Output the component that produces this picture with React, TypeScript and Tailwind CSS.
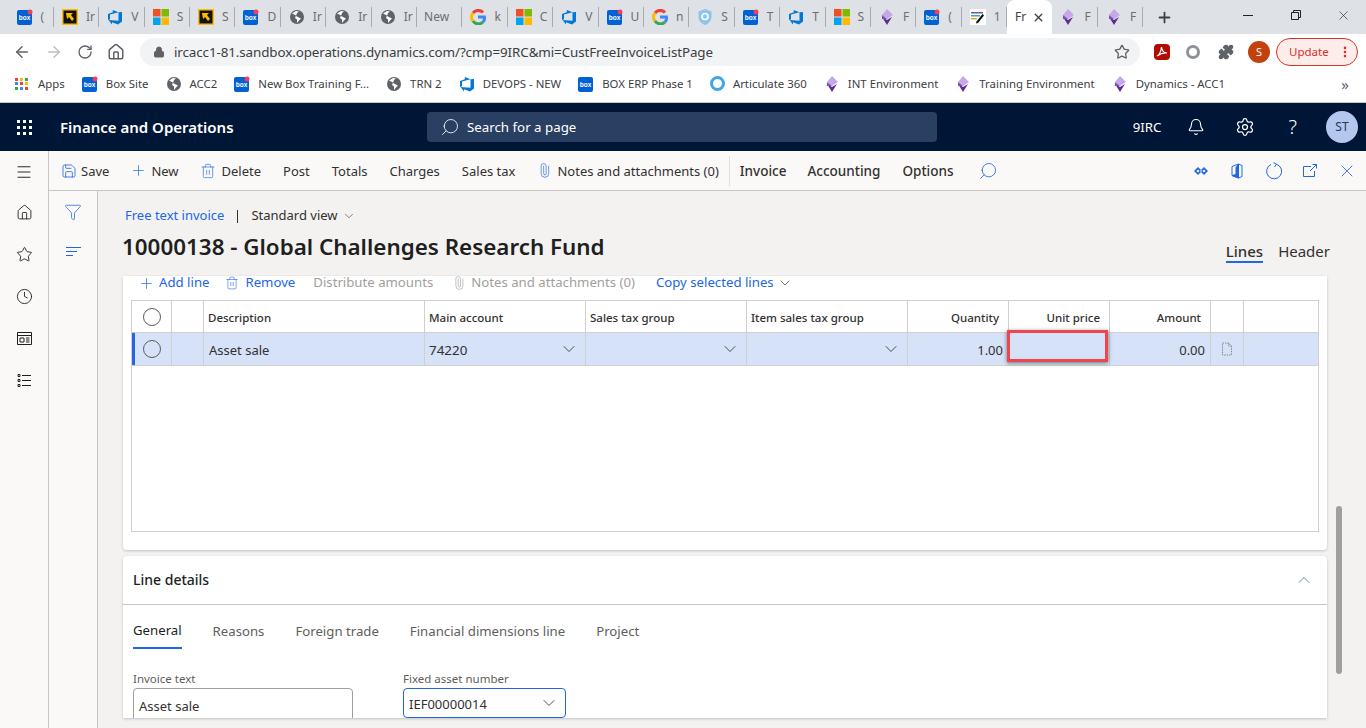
import {
    ArrowLeft,
    ArrowRight,
    Bell,
    ChevronDown,
    ChevronUp,
    Clock,
    Filter,
    Home,
    Lock,
    Menu,
    MoreVertical,
    Paperclip,
    Plus,
    Puzzle,
    RotateCw,
    Save,
    Search,
    Settings,
    Star,
    Trash2,
    X,
} from "lucide-react";

function BoxIcon({ dot = true }: { dot?: boolean }) {
    return (
        <svg width="16" height="16" viewBox="0 0 16 16" className="shrink-0">
            <rect x="0" y="1" width="15" height="15" rx="2" fill="#0061d5" />
            <text x="7.5" y="11" textAnchor="middle" fontSize="6.5" fontWeight="700" fill="#fff" fontFamily="Liberation Sans">
                box
            </text>
            {dot && <circle cx="13" cy="3" r="2.5" fill="#f0415a" />}
        </svg>
    );
}

function YellowIcon() {
    return (
        <svg width="16" height="16" viewBox="0 0 16 16" className="shrink-0">
            <rect width="16" height="16" fill="#fbbc05" />
            <rect x="1.5" y="1.5" width="13" height="13" fill="#111" />
            <path d="M4 4h7l-2 2 3 4-2 2-3-4-2 2z" fill="#fbbc05" />
        </svg>
    );
}

function DevopsIcon() {
    return (
        <svg width="16" height="16" viewBox="0 0 16 16" className="shrink-0">
            <path d="M15 3v9.5l-4 3-6-2.2v2.2L1.5 11l10 .8V3.3zM11.5 3.3 5.8 1v2.2L1 5v6l2-.8V5.5z" fill="#0078d4" />
        </svg>
    );
}

function MsIcon() {
    return (
        <svg width="16" height="16" viewBox="0 0 16 16" className="shrink-0">
            <rect width="7.5" height="7.5" fill="#f25022" />
            <rect x="8.5" width="7.5" height="7.5" fill="#7fba00" />
            <rect y="8.5" width="7.5" height="7.5" fill="#00a4ef" />
            <rect x="8.5" y="8.5" width="7.5" height="7.5" fill="#ffb900" />
        </svg>
    );
}

function GlobeIcon() {
    return (
        <svg width="16" height="16" viewBox="0 0 16 16" className="shrink-0">
            <circle cx="8" cy="8" r="7" fill="#5f6368" />
            <path d="M3 4.5 7 6.5 6 9l2 1.5V14l2-2.5 2-2-3-1.5-2-1 1-3 2-1.5-3-.5z" fill="#fff" />
        </svg>
    );
}

function GoogleIcon() {
    return (
        <svg width="16" height="16" viewBox="0 0 16 16" className="shrink-0" fill="none" strokeWidth="3">
            <path d="M13 3.5A6.5 6.5 0 0 0 3 4" stroke="#ea4335" />
            <path d="M3 4a6.500 6.500 0 0 0 0 8" stroke="#fbbc05" />
            <path d="M3 12a6.500 6.500 0 0 0 10 1" stroke="#34a853" />
            <path d="M13 13a6 6 0 0 0 1.500-5H8" stroke="#4285f4" />
        </svg>
    );
}

function ShieldIcon() {
    return (
        <svg width="16" height="16" viewBox="0 0 16 16" className="shrink-0">
            <path d="M8 0 14.500 2.500V8c0 4-3 6.500-6.500 8C4.500 14.500 1.500 12 1.500 8V2.500z" fill="#8ec5ee" />
            <circle cx="8" cy="7.500" r="3" fill="none" stroke="#fff" strokeWidth="1.500" />
        </svg>
    );
}

function DynamicsIcon() {
    return (
        <svg width="16" height="16" viewBox="0 0 16 16" className="shrink-0">
            <path d="M8 0 14 6 8 10 3 6z" fill="#c6a8e8" />
            <path d="M3 8 8 11 13 8 8 16z" fill="#5c2d91" />
            <path d="M3 6 8 10 3 10z" fill="#7b4fb5" />
        </svg>
    );
}

function NotesIcon() {
    return (
        <svg width="16" height="16" viewBox="0 0 16 16" className="shrink-0">
            <rect width="16" height="16" fill="#fff" />
            <path d="M1 3h12v1.500H1z" fill="#7b4fb5" />
            <path d="M1 6h9v1.500H1z" fill="#2bb5a0" />
            <path d="M1 9h6v1.500H1z" fill="#f0a030" />
            <path d="M12.500 5 14 6.500 8 14l-2 .5.500-2z" fill="#111" />
        </svg>
    );
}

const tabs: { icon?: JSX.Element; label: string }[] = [
    { icon: <BoxIcon />, label: "(" },
    { icon: <YellowIcon />, label: "Ir" },
    { icon: <DevopsIcon />, label: "V" },
    { icon: <MsIcon />, label: "S" },
    { icon: <YellowIcon />, label: "S" },
    { icon: <BoxIcon />, label: "D" },
    { icon: <GlobeIcon />, label: "Ir" },
    { icon: <GlobeIcon />, label: "Ir" },
    { icon: <GlobeIcon />, label: "Ir" },
    { label: "New" },
    { icon: <GoogleIcon />, label: "k" },
    { icon: <MsIcon />, label: "C" },
    { icon: <DevopsIcon />, label: "V" },
    { icon: <BoxIcon />, label: "U" },
    { icon: <GoogleIcon />, label: "n" },
    { icon: <ShieldIcon />, label: "S" },
    { icon: <BoxIcon />, label: "T" },
    { icon: <DevopsIcon />, label: "T" },
    { icon: <MsIcon />, label: "S" },
    { icon: <DynamicsIcon />, label: "F" },
    { icon: <BoxIcon />, label: "(" },
    { icon: <NotesIcon />, label: "1" },
    { label: "Fr" },
    { icon: <DynamicsIcon />, label: "F" },
    { icon: <DynamicsIcon />, label: "F" },
];

function TabStrip() {
    return (
        <div className="h-[34px] bg-[#dee1e6] flex items-stretch pl-[8.5px] relative">
            {tabs.map((tab, index) =>
                index === 22 ? (
                    <div
                        key={index}
                        className="w-[45.4px] bg-white rounded-t-lg flex items-center pl-[8px] gap-[6px] text-[12px] text-[#3c4043]"
                    >
                        <span>{tab.label}</span>
                        <X size={13} strokeWidth={2.5} className="text-[#3c4043]" />
                    </div>
                ) : (
                    <div
                        key={index}
                        className={
                            tab.icon
                                ? "w-[45.4px] flex items-center pl-[8px] gap-[8px] text-[12px] text-[#6b6e72] overflow-hidden border-r border-[#a8abaf] my-[7px]"
                                : "w-[45.4px] flex items-center pl-[7px] text-[12px] text-[#6b6e72] overflow-hidden border-r border-[#a8abaf] my-[7px]"
                        }
                    >
                        {tab.icon}
                        <span className="whitespace-nowrap">{tab.label}</span>
                    </div>
                )
            )}
            <Plus size={17} strokeWidth={2.5} className="text-[#3c4043] ml-[13px] self-center" />
            <div className="flex-1 flex items-start justify-end text-[#3c4043]">
                <div className="w-[48px] h-[30px] flex items-center justify-center">
                    <div className="w-[10px] h-px bg-[#202124]" />
                </div>
                <div className="w-[48px] h-[30px] flex items-center justify-center">
                    <svg width="10" height="10" viewBox="0 0 10 10" fill="none" stroke="#202124">
                        <path d="M.5 2.500h7v7h-7zM2.500 2.500v-2h7v7h-2" />
                    </svg>
                </div>
                <div className="w-[46px] h-[30px] flex items-center justify-center">
                    <X size={15} strokeWidth={1} className="text-[#202124]" />
                </div>
            </div>
        </div>
    );
}

function AddressBar() {
    return (
        <div className="h-[33px] pt-[4px] pb-px bg-white flex items-center text-[#5f6368]">
            <div className="flex items-center w-[140px] pl-[13px] gap-[14px]">
                <ArrowLeft size={18} strokeWidth={2} />
                <ArrowRight size={18} strokeWidth={2} className="text-[#bdc1c6]" />
                <RotateCw size={16} strokeWidth={2} />
                <Home size={18} strokeWidth={2} />
            </div>
            <div className="w-[1000px] h-[28px] rounded-full bg-[#f1f3f4] flex items-center pl-[13px] pr-[10px] text-[13.4px]">
                <Lock size={12} className="text-[#5f6368] mr-[9px]" fill="#5f6368" />
                <span className="text-[#3c4043] tracking-[-0.1px]">
                    ircacc1-81.sandbox.operations.dynamics.com/?cmp=9IRC&amp;mi=CustFreeInvoiceListPage
                </span>
                <Star size={16} className="ml-auto text-[#5f6368]" />
            </div>
            <div className="flex items-center pl-[14px] gap-[16px] flex-1">
                <div className="w-[16px] h-[16px] bg-[#b30b00] rounded-sm flex items-center justify-center">
                    <svg width="12" height="12" viewBox="0 0 12 12" fill="none" stroke="#fff" strokeWidth="1.2">
                        <path d="M1 10c2-1 4-5 4.500-9 .5 4 3 6 5.500 6-3-.5-7 1-10 3z" />
                    </svg>
                </div>
                <div className="w-[14px] h-[14px] rounded-full border-[3px] border-[#8f9296]" />
                <Puzzle size={16} fill="#5f6368" className="ml-[2px]" />
                <div className="w-[22px] h-[22px] rounded-full bg-[#c2410c] text-white text-[11px] flex items-center justify-center ml-[-2px]">
                    S
                </div>
                <div className="w-[82px] h-[28px] rounded-full border border-[#d93025] bg-[#fcecea] text-[#d93025] text-[11.5px] flex items-center pl-[12px] ml-[-10px]">
                    Update
                    <MoreVertical size={14} strokeWidth={2.5} className="ml-auto mr-[5px]" />
                </div>
            </div>
        </div>
    );
}

const bookmarks: { icon: JSX.Element; label: string }[] = [
    { icon: <BoxIcon />, label: "Box Site" },
    { icon: <GlobeIcon />, label: "ACC2" },
    { icon: <BoxIcon />, label: "New Box Training F..." },
    { icon: <GlobeIcon />, label: "TRN 2" },
    { icon: <DevopsIcon />, label: "DEVOPS - NEW" },
    { icon: <BoxIcon dot={false} />, label: "BOX ERP Phase 1" },
    {
        icon: <div className="w-[15px] h-[15px] rounded-full border-[3px] border-[#42a5e8]" />,
        label: "Articulate 360",
    },
    { icon: <DynamicsIcon />, label: "INT Environment" },
    { icon: <DynamicsIcon />, label: "Training Environment" },
    { icon: <DynamicsIcon />, label: "Dynamics - ACC1" },
];

function BookmarkBar() {
    return (
        <div className="h-[33px] pt-px bg-white flex items-center pl-[15px] gap-[17px] text-[11.4px] text-[#3c4043] relative">
            <div className="flex items-center gap-[10px]">
                <div className="grid grid-cols-3 gap-[1.5px] w-[13px]">
                    <div className="w-[3px] h-[3px] bg-[#ea4335]" />
                    <div className="w-[3px] h-[3px] bg-[#fbbc05]" />
                    <div className="w-[3px] h-[3px] bg-[#34a853]" />
                    <div className="w-[3px] h-[3px] bg-[#4285f4]" />
                    <div className="w-[3px] h-[3px] bg-[#ea4335]" />
                    <div className="w-[3px] h-[3px] bg-[#fbbc05]" />
                    <div className="w-[3px] h-[3px] bg-[#34a853]" />
                    <div className="w-[3px] h-[3px] bg-[#4285f4]" />
                    <div className="w-[3px] h-[3px] bg-[#ea4335]" />
                </div>
                <span>Apps</span>
            </div>
            {bookmarks.map((bookmark, index) => (
                <div key={index} className="flex items-center gap-[8px] whitespace-nowrap">
                    {bookmark.icon}
                    <span>{bookmark.label}</span>
                </div>
            ))}
            <span className="ml-auto mr-[17px] text-[15px] text-[#5f6368]">»</span>
        </div>
    );
}

function NavBar() {
    return (
        <div className="h-[48px] bg-[#001636] flex items-center text-white">
            <div className="w-[48px] flex justify-center">
                <div className="grid grid-cols-3 gap-[3px]">
                    {[0, 1, 2, 3, 4, 5, 6, 7, 8].map((dot) => (
                        <div key={dot} className="w-[3px] h-[3px] bg-white" />
                    ))}
                </div>
            </div>
            <div className="ml-[12px] w-[367px] text-[15px] font-semibold pt-px">Finance and Operations</div>
            <div className="w-[510px] h-[30px] rounded-sm bg-[#2a4063] flex items-center pl-[13px] gap-[7px] text-[13.3px]">
                <Search size={20} strokeWidth={1} className="-scale-x-100" />
                <span className="pt-[2px]">Search for a page</span>
            </div>
            <div className="ml-auto flex items-center pr-[8px]">
                <span className="text-[13.3px] mr-[25px] pt-px">9IRC</span>
                <Bell size={18} strokeWidth={1.5} className="mr-[30px]" />
                <Settings size={20} strokeWidth={1.5} className="mr-[34px]" />
                <span className="text-[20px] font-light mr-[29px]">?</span>
                <div className="w-[32px] h-[32px] rounded-full bg-[#b4c7ee] text-[#28374f] text-[12px] flex items-center justify-center">
                    ST
                </div>
            </div>
        </div>
    );
}

function SideRail() {
    return (
        <div className="w-[49px] shrink-0 bg-[#faf9f8] border-r border-[#c8c6c4] flex flex-col items-center pt-[12px] gap-[25px] text-[#201f1e]">
            <Menu size={18} strokeWidth={1.25} className="mb-[-2px]" />
            <Home size={17} strokeWidth={1.25} />
            <Star size={17} strokeWidth={1.25} />
            <Clock size={17} strokeWidth={1.25} />
            <svg width="17" height="17" viewBox="0 0 17 17" fill="none" stroke="#201f1e">
                <path d="M1.500 2.500h14v12h-14zM1.500 5.500h14M4 8h4v4H4zM10 8h3.500M10 10h3.500M10 12h3.500" />
            </svg>
            <svg width="17" height="17" viewBox="0 0 17 17" fill="none" stroke="#201f1e">
                <path d="M2 2.500h2v2H2zM2 7.500h2v2H2zM2 12.500h2v2H2zM6 3.500h9M6 8.500h9M6 13.500h9" />
            </svg>
        </div>
    );
}

function CommandBar() {
    return (
        <div className="h-[40px] bg-[#faf9f8] border-b border-[#c8c6c4] flex items-center pl-[12px] text-[13px] text-[#323130]">
            <Save size={16} strokeWidth={1.25} className="text-[#2266e3] mr-[4px]" />
            <span className="mr-[21px] pt-[2px]">Save</span>
            <Plus size={17} strokeWidth={1} className="text-[#2266e3] mr-[4px]" />
            <span className="mr-[21px] pt-[2px]">New</span>
            <Trash2 size={16} strokeWidth={1} className="text-[#2266e3] mr-[6px]" />
            <span className="mr-[22px] pt-[2px]">Delete</span>
            <span className="mr-[22px] pt-[2px]">Post</span>
            <span className="mr-[22px] pt-[2px]">Totals</span>
            <span className="mr-[22px] pt-[2px]">Charges</span>
            <span className="mr-[22px] pt-[2px]">Sales tax</span>
            <Paperclip size={15} strokeWidth={1} className="text-[#2266e3] mr-[5px] -rotate-45" />
            <span className="pt-[2px]">Notes and attachments (0)</span>
            <div className="w-px h-[30px] bg-[#e1dfdd] mx-[10px]" />
            <span className="mr-[21px] text-[13.5px] font-medium pt-[2px]">Invoice</span>
            <span className="mr-[22px] text-[13.5px] font-medium pt-[2px]">Accounting</span>
            <span className="text-[13.5px] font-medium pt-[2px]">Options</span>
            <Search size={20} strokeWidth={1} className="text-[#2266e3] ml-[25px] -scale-x-100" />
            <div className="ml-auto flex items-center pr-px text-[#2266e3]">
                <div className="w-[36.5px] flex justify-center">
                    <svg width="16" height="16" viewBox="0 0 16 16" fill="#2266e3">
                        <path d="M5 4 9 8 5 12 1 8zM11 4 15 8 11 12 7 8z" fillRule="evenodd" />
                        <path d="M5 6.500 6.500 8 5 9.500 3.500 8zM11 6.500 12.500 8 11 9.500 9.500 8z" fill="#fff" />
                    </svg>
                </div>
                <div className="w-[36.5px] flex justify-center">
                    <svg width="16" height="16" viewBox="0 0 16 16" fill="none" stroke="#2266e3">
                        <path d="M9.500 1 3 3.500v9L9.500 15 13 13.500v-11z" />
                        <path d="M9.500 1v14L3 12.500l4-1V4.500z" fill="#2266e3" />
                    </svg>
                </div>
                <div className="w-[36.5px] flex justify-center">
                    <svg width="18" height="18" viewBox="0 0 18 18" fill="none" stroke="#2266e3">
                        <path d="M6 2.500a7.500 7.500 0 1 0 5.500-.3" />
                        <path d="M8.500.5 11.500 2.200 9.500 5" />
                    </svg>
                </div>
                <div className="w-[36.5px] flex justify-center">
                    <svg width="16" height="16" viewBox="0 0 16 16" fill="none" stroke="#2266e3">
                        <path d="M9 3.500H1.500v10h11V8M8 8l6.500-6.500M10.500 1.500h4v4" />
                    </svg>
                </div>
                <div className="w-[36.5px] flex justify-center">
                    <X size={20} strokeWidth={1} />
                </div>
            </div>
        </div>
    );
}

function RadioCircle() {
    return <div className="w-[18px] h-[18px] rounded-full border border-[#605e5c]" />;
}

function LinesGrid() {
    const cols =
        "grid grid-cols-[40px_32px_221px_161px_161px_161px_101px_101px_101px_33px_75px]";
    const cell = "border-r border-[#d2d0ce] flex items-center";
    return (
        <div className="mx-[8px] h-[232px] border border-[#d2d0ce] bg-white">
            <div className={`${cols} h-[32px] border-b border-[#d2d0ce] text-[11.5px] font-medium text-[#323130]`}>
                <div className={`${cell} justify-center`}>
                    <RadioCircle />
                </div>
                <div className={cell} />
                <div className={`${cell} pl-[4px] pt-[2px]`}>Description</div>
                <div className={`${cell} pl-[4px] pt-[2px]`}>Main account</div>
                <div className={`${cell} pl-[4px] pt-[2px]`}>Sales tax group</div>
                <div className={`${cell} pl-[4px] pt-[2px]`}>Item sales tax group</div>
                <div className={`${cell} justify-end pr-[9px] pt-[2px]`}>Quantity</div>
                <div className={`${cell} justify-end pr-[9px] pt-[2px]`}>Unit price</div>
                <div className={`${cell} justify-end pr-[9px] pt-[2px]`}>Amount</div>
                <div className={cell} />
                <div />
            </div>
            <div className={`${cols} h-[33px] border-b border-[#d2d0ce] bg-[#d5e2f8] text-[13px] text-[#323130] relative`}>
                <div className={`${cell} justify-center relative`}>
                    <div className="absolute left-0 top-0 bottom-0 w-[3px] bg-[#2266e3]" />
                    <RadioCircle />
                </div>
                <div className={cell} />
                <div className={`${cell} pl-[5px] pt-[3px]`}>Asset sale</div>
                <div className={`${cell} pl-[4px] justify-between pr-[6px]`}>
                    <span className="pt-[2px] text-[13.4px]">74220</span>
                    <ChevronDown size={20} strokeWidth={1} />
                </div>
                <div className={`${cell} justify-end pr-[6px]`}>
                    <ChevronDown size={20} strokeWidth={1} />
                </div>
                <div className={`${cell} justify-end pr-[6px]`}>
                    <ChevronDown size={20} strokeWidth={1} />
                </div>
                <div className={`${cell} justify-end pr-[5px] pt-[3px]`}>1.00</div>
                <div className={`${cell} relative`}>
                    <div className="absolute -left-[2px] -top-[3px] w-[101px] h-[32px] border-[3px] border-[#f0454c] shadow-[0_1px_4px_rgba(0,0,0,0.5)]" />
                </div>
                <div className={`${cell} justify-end pr-[5px] pt-[3px]`}>0.00</div>
                <div className={`${cell} justify-center`}>
                    <svg width="12" height="14" viewBox="0 0 12 14" fill="none" stroke="#8a8886" strokeDasharray="1.500 1">
                        <path d="M1.500 1h6l3 3v9h-9zM7.500 1v3h3" />
                    </svg>
                </div>
                <div />
            </div>
        </div>
    );
}

function DetailTab({ label, active }: { label: string; active?: boolean }) {
    return (
        <div
            className={
                active
                    ? "h-full flex items-center border-b-2 border-[#2266e3] text-[#201f1e]"
                    : "h-full flex items-center text-[#605e5c]"
            }
        >
            {label}
        </div>
    );
}

function Content() {
    return (
        <div className="flex-1 bg-[#f3f2f1] relative overflow-hidden">
            <div className="pl-[27px] pt-[17px] h-[85px]">
                <div className="flex items-center text-[13px] h-[16px]">
                    <span className="text-[#2266e3]">Free text invoice</span>
                    <div className="w-px h-[13px] bg-[#323130] mx-[13px]" />
                    <span className="text-[#323130]">Standard view</span>
                    <ChevronDown size={14} strokeWidth={1} className="ml-[4px] text-[#323130]" />
                </div>
                <div className="flex items-end justify-between mt-[7px]">
                    <h1 className="ml-[-3px] text-[22.4px] leading-[32px] font-semibold text-[#201f1e]">
                        10000138 - Global Challenges Research Fund
                    </h1>
                    <div className="flex items-end gap-[15px] pr-[36px] text-[15px] text-[#323130]">
                        <div className="h-[24px] leading-[24px] border-b-2 border-[#2266e3] font-medium">Lines</div>
                        <div className="h-[24px] leading-[24px]">Header</div>
                    </div>
                </div>
            </div>
            <div className="ml-[25px] w-[1204px] h-[274px] bg-white shadow-[0_1px_3px_rgba(0,0,0,0.2)] rounded-b-sm">
                <div className="h-[24px] flex items-center pl-[15px] pb-[10px] text-[13.2px]">
                    <Plus size={17} strokeWidth={1} className="text-[#2266e3] mr-[4px]" />
                    <span className="text-[#2266e3] mr-[16px]">Add line</span>
                    <Trash2 size={14} strokeWidth={1} className="text-[#2266e3] mr-[6px]" />
                    <span className="text-[#2266e3] mr-[18px]">Remove</span>
                    <span className="text-[#a19f9d] mr-[19px]">Distribute amounts</span>
                    <Paperclip size={14} strokeWidth={1} className="text-[#a19f9d] mr-[5px] -rotate-45" />
                    <span className="text-[#a19f9d] mr-[21px]">Notes and attachments (0)</span>
                    <span className="text-[#2266e3]">Copy selected lines</span>
                    <ChevronDown size={16} strokeWidth={1} className="text-[#323130] ml-[3px]" />
                </div>
                <LinesGrid />
            </div>
            <div className="ml-[25px] mt-[6px] w-[1204px] h-[162px] bg-white shadow-[0_1px_3px_rgba(0,0,0,0.2)] rounded-t-sm overflow-hidden">
                <div className="h-[49px] border-b border-[#c8c6c4] flex items-center justify-between pl-[10px] pr-[13px]">
                    <span className="text-[14px] font-medium text-[#201f1e] pb-px">Line details</span>
                    <ChevronUp size={20} strokeWidth={1} className="text-[#52709f]" />
                </div>
                <div className="h-[44px] pt-[10px] flex items-stretch gap-[31px] ml-[10px] text-[13.2px]">
                    <DetailTab label="General" active />
                    <DetailTab label="Reasons" />
                    <DetailTab label="Foreign trade" />
                    <DetailTab label="Financial dimensions line" />
                    <DetailTab label="Project" />
                </div>
                <div className="flex ml-[10px] mt-[21px] text-[#323130]">
                    <div className="w-[270px]">
                        <div className="text-[11.5px] text-[#605e5c] h-[18px] leading-[17px]">Invoice text</div>
                        <div className="w-[220px] h-[34px] border border-[#a19f9d] rounded-sm flex items-center pl-[5px] pt-[3px] text-[13px]">
                            Asset sale
                        </div>
                    </div>
                    <div>
                        <div className="text-[11.5px] text-[#605e5c] h-[18px] leading-[17px]">Fixed asset number</div>
                        <div className="w-[163px] h-[30px] border border-[#2266e3] rounded-sm flex items-center justify-between pl-[5px] pr-[6px] text-[13px]">
                            <span className="pt-[3px]">IEF00000014</span>
                            <ChevronDown size={20} strokeWidth={1} />
                        </div>
                    </div>
                </div>
            </div>
            <div className="absolute left-[1238px] top-[315px] w-[6px] h-[168px] rounded-full bg-[#a19f9d]" />
        </div>
    );
}

export default function App() {
    return (
        <div className="h-[728px] overflow-hidden bg-[#f3f2f1] font-['Noto_Sans',sans-serif] flex flex-col">
            <TabStrip />
            <AddressBar />
            <BookmarkBar />
            <div className="h-[3px] bg-white border-b border-[#c8c6c4]" />
            <NavBar />
            <div className="flex-1 flex min-h-0">
                <SideRail />
                <div className="flex-1 flex flex-col min-w-0">
                    <CommandBar />
                    <div className="flex-1 flex min-h-0">
                        <div className="w-[49px] shrink-0 bg-[#faf9f8] border-r border-[#c8c6c4] flex flex-col items-center pt-[12px] gap-[22px] text-[#2266e3]">
                            <Filter size={18} strokeWidth={1} />
                            <svg width="17" height="17" viewBox="0 0 17 17" fill="none" stroke="#2266e3">
                                <path d="M1 4.500h15M1 8.500h11M1 12.500h7" />
                            </svg>
                        </div>
                        <Content />
                    </div>
                </div>
            </div>
        </div>
    );
}
